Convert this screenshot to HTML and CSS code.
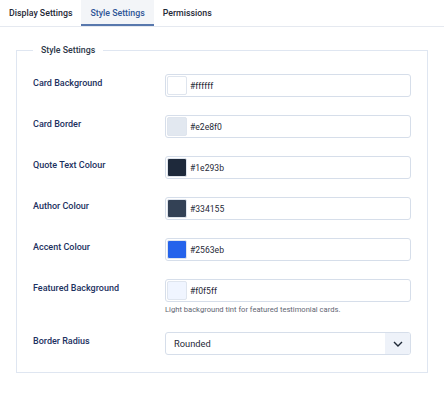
FILE: index.html
```html
<!DOCTYPE html>
<html>
<head>
<meta charset="utf-8">
<link rel="stylesheet" href="styles.css">
</head>
<body>
<div class="tabs">
  <div class="tab">Display Settings</div>
  <div class="tab active">Style Settings</div>
  <div class="tab">Permissions</div>
</div>
<fieldset class="panel">
  <legend>Style Settings</legend>
  <div class="row">
    <label class="lbl">Card Background</label>
    <div class="field"><div class="color"><span class="sw" style="background:#ffffff"></span><span class="val">#ffffff</span></div></div>
  </div>
  <div class="row">
    <label class="lbl">Card Border</label>
    <div class="field"><div class="color"><span class="sw" style="background:#e2e8f0"></span><span class="val">#e2e8f0</span></div></div>
  </div>
  <div class="row">
    <label class="lbl">Quote Text Colour</label>
    <div class="field"><div class="color"><span class="sw" style="background:#1e293b"></span><span class="val">#1e293b</span></div></div>
  </div>
  <div class="row">
    <label class="lbl">Author Colour</label>
    <div class="field"><div class="color"><span class="sw" style="background:#334155"></span><span class="val">#334155</span></div></div>
  </div>
  <div class="row">
    <label class="lbl">Accent Colour</label>
    <div class="field"><div class="color"><span class="sw" style="background:#2563eb"></span><span class="val">#2563eb</span></div></div>
  </div>
  <div class="row">
    <label class="lbl">Featured Background</label>
    <div class="field"><div class="color"><span class="sw" style="background:#f0f5ff"></span><span class="val">#f0f5ff</span></div>
      <div class="help">Light background tint for featured testimonial cards.</div></div>
  </div>
  <div class="row">
    <label class="lbl">Border Radius</label>
    <div class="field"><div class="select"><span class="sel-val">Rounded</span><span class="caret"><svg width="10" height="6" viewBox="0 0 10 6"><path d="M1 1l4 4 4-4" fill="none" stroke="#1f2937" stroke-width="1.4"/></svg></span></div></div>
  </div>
</fieldset>
</body>
</html>
```
FILE: styles.css
```css
* { box-sizing: border-box; }
body { margin: 0; background: #fff; font-family: Roboto, "Liberation Sans", sans-serif; color: #1f2937; }
.tabs { display: flex; height: 27px; border-bottom: 1px solid #e5e9f0; }
.tab { padding: 0 9px; font-size: 8.8px; font-weight: 500; color: #1f2937; line-height: 26px; height: 26px; }
.tab.active { background: #f3f5f8; color: #2f5597; box-shadow: inset 0 -2px 0 #5878ad; }
.panel { margin: 18px 16px 0 16px; border: 1px solid #dfe6f1; padding: 19px 16px 17px 16px; min-width: 0; }
.panel legend { margin-left: 0; padding: 0 8px; font-size: 8.8px; font-weight: 500; color: #2d3748; }
.row { display: flex; align-items: flex-start; margin-bottom: 18px; }
.row:last-child { margin-bottom: 0; }
.lbl { width: 132px; flex: none; font-size: 9px; font-weight: 500; color: #1c3160; padding-top: 4px; }
.field { flex: 1; }
.color { display: flex; align-items: center; height: 23px; border: 1px solid #d6deea; border-radius: 3px; padding: 1px; }
.sw { width: 20px; height: 19px; border: 1px solid #dfe5ee; border-radius: 2px; flex: none; }
.val { margin-left: 3px; font-size: 8.6px; color: #1f2937; }
.help { font-size: 7.6px; color: #5f6673; margin-top: 3px; }
.select { display: flex; align-items: stretch; height: 23px; border: 1px solid #d6deea; border-radius: 3px; }
.sel-val { flex: 1; padding-left: 8px; font-size: 9.3px; line-height: 21px; color: #1f2937; }
.caret { width: 25px; background: #eef2f9; display: flex; align-items: center; justify-content: center; border-radius: 0 2px 2px 0; }
```
